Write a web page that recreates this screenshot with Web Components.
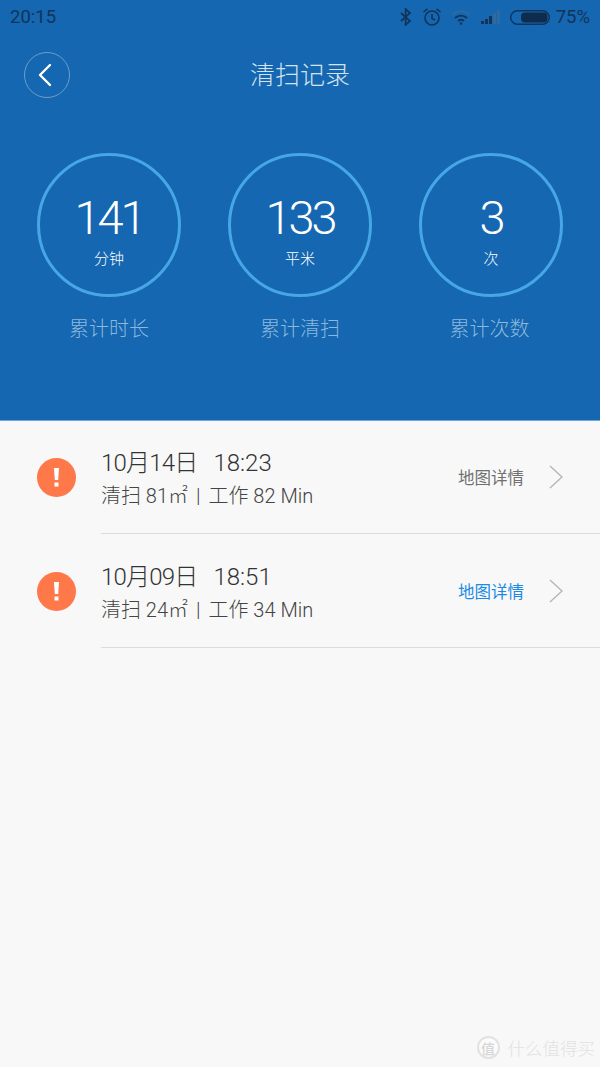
<!DOCTYPE html>
<html>
<head>
<meta charset="utf-8">
<title>清扫记录</title>
<style>
    html, body { margin: 0; padding: 0; }
    body {
        width: 600px;
        height: 1067px;
        overflow: hidden;
        background: #f8f8f8;
        font-family: Roboto, "Noto Sans CJK SC", sans-serif;
    }
    record-page { height: 1067px; }
</style>
</head>
<body>
<record-page>
    <status-bar slot="head"></status-bar>
    <title-bar slot="head">清扫记录</title-bar>
    <stat-row slot="head">
        <stat-circle value="141" unit="分钟" label="累计时长"></stat-circle>
        <stat-circle value="133" unit="平米" label="累计清扫"></stat-circle>
        <stat-circle value="3" unit="次" label="累计次数"></stat-circle>
    </stat-row>
    <clean-row date="10月14日" time="18:23" area="清扫 81㎡" work="工作 82 Min"></clean-row>
    <clean-row date="10月09日" time="18:51" area="清扫 24㎡" work="工作 34 Min" active></clean-row>
</record-page>
<script>
class RecordPage extends HTMLElement {
    constructor(){
        super();
        let shadow = this.attachShadow({mode: 'open'});
        shadow.innerHTML = `
        <style>
            :host { display: flex; flex-direction: column; position: relative; }
            header { height: 420px; background: #1467b0; box-shadow: 0 1px 0 #6ea6d8; }
            .mark {
                position: absolute; right: 5px; bottom: 7px;
                display: flex; align-items: center; gap: 8px;
                color: #e2e2e2; font-size: 17.5px; font-weight: 300;
            }
            .mark span {
                box-sizing: border-box; width: 23px; height: 23px; border-radius: 50%;
                display: flex; align-items: center; justify-content: center;
                border: 2px solid #e2e2e2; background: #fbfbfb; color: #d6d6d6; font-size: 14px; font-weight: 500;
            }
        </style>
        <header><slot name="head"></slot></header>
        <slot></slot>
        <div class="mark"><span>值</span>什么值得买</div>
        `;
    }
}
customElements.define("record-page", RecordPage);

class StatusBar extends HTMLElement {
    constructor(){
        super();
        let shadow = this.attachShadow({mode: 'open'});
        shadow.innerHTML = `
        <style>
            :host {
                display: flex; align-items: center; height: 34px; padding: 0 10px;
                color: #12345a; font-size: 18.5px; font-family: Roboto, sans-serif;
            }
            .icons { margin-left: auto; display: flex; align-items: center; }
            svg { display: block; }
        </style>
        <div>20:15</div>
        <div class="icons">
            <svg width="12" height="18" viewBox="0 0 12 18" fill="none" stroke="#12345a" stroke-width="1.700" style="margin-right:10px"><path d="M1 5l9 8-4.400 4V1L10 5l-9 8"/></svg>
            <svg width="20" height="20" viewBox="0 0 20 20" fill="none" stroke="#12345a" stroke-width="1.600" style="margin-right:8px"><circle cx="10" cy="11" r="7"/><path d="M10 7v4.500l3 1.500M1.500 5l4-3.200M18.500 5l-4-3.200"/></svg>
            <svg width="22" height="16" viewBox="0 0 22 16" fill="none" style="margin-right:9px"><path d="M2 6c5-5 13-5 18 0" stroke="#2f6a9f" stroke-width="1.800"/><path d="M5 9c3.500-3.300 8.500-3.300 12 0" stroke="#12345a" stroke-width="1.800"/><path d="M8 12c2-1.600 4-1.600 6 0" stroke="#12345a" stroke-width="1.800"/><circle cx="11" cy="14.500" r="1.300" fill="#12345a"/></svg>
            <svg width="21" height="15" viewBox="0 0 21 15" style="margin-right:8px"><rect x="0" y="11" width="3" height="3" fill="#12345a"/><rect x="4" y="9" width="3" height="5" fill="#12345a"/><rect x="8" y="6" width="3" height="8" fill="#12345a"/><rect x="12" y="3" width="3" height="11" fill="#2f6a9f"/><rect x="16" y="0" width="3" height="14" fill="#2f6a9f"/></svg>
            <svg width="40" height="15" viewBox="0 0 40 15" style="margin-right:6px"><rect x="0.700" y="0.700" width="38.600" height="13.600" rx="6.800" fill="none" stroke="#12345a" stroke-width="1.400"/><rect x="11" y="2.500" width="26.500" height="10" rx="4" fill="#0f2c4d"/></svg>
            <div>75%</div>
        </div>
        `;
    }
}
customElements.define("status-bar", StatusBar);

class TitleBar extends HTMLElement {
    constructor(){
        super();
        let shadow = this.attachShadow({mode: 'open'});
        shadow.innerHTML = `
        <style>
            :host {
                display: grid; grid-template-columns: 1fr auto 1fr; align-items: center;
                height: 46px; margin-top: 18px; padding: 0 24px;
                color: #d5e3f1; font-size: 25px; font-weight: 300;
            }
            .title { margin-bottom: 4px; }
            .back {
                width: 44px; height: 44px; border: 1px solid #6d9fce; border-radius: 50%;
                display: flex; align-items: center; justify-content: center;
            }
            svg { margin-left: -5px; }
        </style>
        <div><div class="back">
            <svg width="16" height="24" viewBox="0 0 16 24" fill="none" stroke="#fff" stroke-width="2.400" stroke-linecap="round" stroke-linejoin="round"><path d="M13 2L3 12l10 10"/></svg>
        </div></div>
        <div class="title"><slot></slot></div>
        <div></div>
        `;
    }
}
customElements.define("title-bar", TitleBar);

class StatRow extends HTMLElement {
    constructor(){
        super();
        let shadow = this.attachShadow({mode: 'open'});
        shadow.innerHTML = `
        <style>
            :host { display: flex; justify-content: space-between; margin-top: 55px; padding: 0 37px; }
        </style>
        <slot></slot>
        `;
    }
}
customElements.define("stat-row", StatRow);

class StatCircle extends HTMLElement {
    constructor(){
        super();
        let shadow = this.attachShadow({mode: 'open'});
        shadow.innerHTML = `
        <style>
            :host { display: flex; flex-direction: column; align-items: center; width: 144px; }
            .ring {
                box-sizing: border-box; width: 144px; height: 144px;
                border: 3px solid #47a6e5; border-radius: 50%;
                display: flex; flex-direction: column; align-items: center;
                color: #fff;
            }
            .value { font-size: 47px; font-weight: 300; line-height: 54px; margin-top: 35px; letter-spacing: -3px; }
            .unit { font-size: 15px; line-height: 20px; margin-top: 4px; font-weight: 300; }
            .label { font-size: 20px; font-weight: 300; line-height: 28px; margin-top: 18px; color: #8db8de; }
            :host(:last-child) .label { margin-right: 3px; }
        </style>
        <div class="ring">
            <div class="value">${this.getAttribute("value")}</div>
            <div class="unit">${this.getAttribute("unit")}</div>
        </div>
        <div class="label">${this.getAttribute("label")}</div>
        `;
    }
}
customElements.define("stat-circle", StatCircle);

class CleanRow extends HTMLElement {
    constructor(){
        super();
        let shadow = this.attachShadow({mode: 'open'});
        shadow.innerHTML = `
        <style>
            :host { display: flex; height: 114px; padding-left: 37px; color: #333; }
            .alert {
                flex: none; width: 39px; height: 39px; margin: 38px 25px 0 0; border-radius: 50%;
                background: #ff7849; display: flex; align-items: center; justify-content: center;
            }
            .main {
                flex: 1; display: flex; align-items: center; box-sizing: border-box;
                border-bottom: 1px solid #dcdcdc; padding-right: 36px;
            }
            .text { flex: 1; margin-top: 2px; }
            .date { font-size: 24px; line-height: 32px; font-weight: 300; display: flex; gap: 16px; padding-top: 2px; }
            .date span:first-child { letter-spacing: -0.800px; }
            .sub { font-size: 20px; line-height: 28px; margin-top: 3px; font-weight: 300; color: #444; }
            .sub i { font-style: normal; margin: 0 8px; }
            .link { font-size: 16.5px; color: #707070; font-weight: 400; margin-right: 25px; }
            :host([active]) .link { color: #1a8ae6; }
            svg { display: block; }
        </style>
        <div class="alert">
            <svg width="5" height="19" viewBox="0 0 5 19" fill="#fff"><path d="M0 0h5L4.200 12H0.800z"/><rect x="0.500" y="14.500" width="4" height="4"/></svg>
        </div>
        <div class="main">
            <div class="text">
                <div class="date"><span>${this.getAttribute("date")}</span><span>${this.getAttribute("time")}</span></div>
                <div class="sub">${this.getAttribute("area")}<i>|</i>${this.getAttribute("work")}</div>
            </div>
            <div class="link">地图详情</div>
            <svg width="15" height="24" viewBox="0 0 15 24" fill="none" stroke="#b4b4b4" stroke-width="1.300"><path d="M1 1l12 11L1 23"/></svg>
        </div>
        `;
    }
}
customElements.define("clean-row", CleanRow);
</script>
</body>
</html>
